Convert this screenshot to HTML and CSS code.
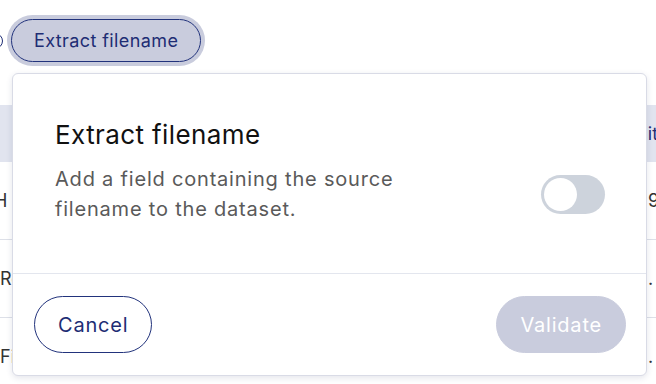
FILE: index.html
```html
<!DOCTYPE html>
<html lang="en">
<head>
    <meta charset="UTF-8">
    <meta name="viewport" content="width=device-width, initial-scale=1.0">
    <title>Extract filename</title>
    <link rel="stylesheet" href="styles.css">
</head>
<body>
    <div class="page">
        <div class="toolbar">
            <span class="round-icon"></span>
            <button class="chip" type="button">Extract filename</button>
        </div>

        <div class="table">
            <div class="row head">
                <span class="cell first"></span>
                <span class="cell last">Edit</span>
            </div>
            <div class="row">
                <span class="cell first shift">H 1</span>
                <span class="cell last">9</span>
            </div>
            <div class="row">
                <span class="cell first">Report</span>
                <span class="cell last">.</span>
            </div>
            <div class="row">
                <span class="cell first">Files</span>
                <span class="cell last">.</span>
            </div>
        </div>

        <div class="popover">
            <div class="popover-body">
                <h2 class="popover-title">Extract filename</h2>
                <div class="option">
                    <p class="option-text">Add a field containing the source filename to the dataset.</p>
                    <label class="switch">
                        <input type="checkbox">
                        <span class="knob"></span>
                    </label>
                </div>
            </div>
            <div class="popover-footer">
                <button class="btn btn-outline" type="button">Cancel</button>
                <button class="btn btn-disabled" type="button" disabled>Validate</button>
            </div>
        </div>
    </div>
</body>
</html>
```

FILE: styles.css
```css
* {
    box-sizing: border-box;
}

body {
    margin: 0;
    font-family: 'Inter', 'Noto Sans', sans-serif;
    background: #fff;
    color: #333;
    overflow: hidden;
}

.page {
    position: relative;
    width: 656px;
    height: 384px;
}

.toolbar {
    display: flex;
    align-items: center;
    gap: 8px;
    padding-top: 19px;
    margin-left: -13px;
}

.round-icon {
    width: 16px;
    height: 16px;
    border: 1.5px solid #1f2e76;
    border-radius: 50%;
}

.chip {
    height: 43px;
    padding: 0 22px;
    background: #c9ccdd;
    border: 1px solid #22337c;
    border-radius: 22px;
    box-shadow: 0 0 0 4px #c9ccdd;
    color: #1e2d74;
    font-family: inherit;
    font-size: 18px;
    letter-spacing: 0.4px;
}

.table {
    margin-top: 43px;
}

.row {
    display: flex;
    justify-content: space-between;
    align-items: center;
    height: 78px;
    border-bottom: 1px solid #dde0e8;
    font-size: 18px;
    white-space: nowrap;
}

.row.head {
    height: 57px;
    background: #e1e4ef;
    color: #1f2e76;
    border-bottom: none;
}

.cell.shift {
    margin-left: -6px;
}

.cell.last {
    width: 16px;
    margin-right: -8px;
}

.row.head .cell.last {
    width: 40px;
    margin-right: -10px;
}

.popover {
    position: absolute;
    top: 73px;
    left: 12px;
    width: 635px;
    height: 303px;
    background: #fff;
    border: 1px solid #d9dbe6;
    border-radius: 6px;
    box-shadow: 0 2px 6px rgba(30, 40, 90, 0.12);
    display: flex;
    flex-direction: column;
}

.popover-body {
    height: 200px;
    padding: 46px 41px 0 42px;
    border-bottom: 1px solid #e3e6ee;
}

.popover-title {
    margin: 0 0 14px;
    font-size: 26px;
    font-weight: 400;
    letter-spacing: 0.4px;
    line-height: 30px;
    color: #111;
}

.option {
    display: flex;
    justify-content: space-between;
    align-items: center;
}

.option-text {
    margin: 0;
    max-width: 360px;
    font-size: 20px;
    letter-spacing: 0.8px;
    line-height: 30px;
    color: #5a5a5a;
}

.switch {
    position: relative;
    width: 64px;
    height: 39px;
    border-radius: 20px;
    background: #cdd3dc;
}

.switch input {
    display: none;
}

.knob {
    position: absolute;
    top: 3px;
    left: 3px;
    width: 33px;
    height: 33px;
    border-radius: 50%;
    background: #fff;
}

.popover-footer {
    flex: 1;
    display: flex;
    justify-content: space-between;
    align-items: center;
    padding: 0 20px 0 21px;
}

.btn {
    height: 57px;
    padding: 0 23px;
    border-radius: 29px;
    font-family: inherit;
    font-size: 20px;
    letter-spacing: 0.8px;
}

.btn-outline {
    background: #fff;
    border: 1px solid #22337c;
    color: #1e2d74;
}

.btn-disabled {
    background: #c9ccdd;
    border: 1px solid #c9ccdd;
    color: #fff;
}
```
